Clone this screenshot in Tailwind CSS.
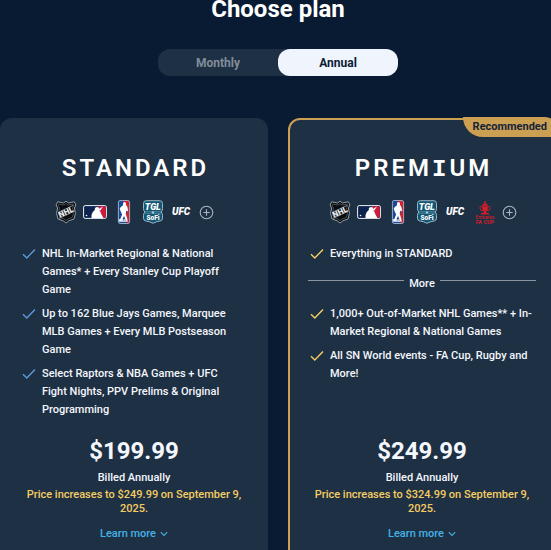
<!DOCTYPE html>
<html lang="en">
    <head>
        <meta charset="UTF-8" />
        <meta name="viewport" content="width=device-width, initial-scale=1.0" />
        <title>Choose plan</title>
        <script src="https://cdn.jsdelivr.net/npm/@tailwindcss/browser@4"></script>
    </head>
    <body class="bg-[#091b33] text-[#f4f7fc] font-['Roboto',sans-serif] overflow-hidden">
        <!-- Shared icons -->
        <svg class="hidden" aria-hidden="true">
            <symbol id="check" viewBox="0 0 14 12">
                <path d="M1 6.2 4.8 10 13 1.4" fill="none" stroke="currentColor" stroke-width="1.4" />
            </symbol>
            <symbol id="chevron" viewBox="0 0 8 6">
                <path d="M.8 1.2 4 4.4 7.2 1.2" fill="none" stroke="currentColor" stroke-width="1.1" />
            </symbol>
            <symbol id="plus" viewBox="0 0 15 15">
                <g fill="none" stroke="#aab4c2" stroke-width="1.1">
                    <circle cx="7.5" cy="7.5" r="6.3" />
                    <path d="M7.5 4.3v6.4M4.3 7.5h6.4" />
                </g>
            </symbol>
            <symbol id="nhl" viewBox="0 0 24 24">
                <path d="M12 1.2 14.4 3 20.3 1.8 21.9 5 20.4 8 21.4 13.5 20 19 14.8 20.8 12 23 9.2 20.8 4 19 2.6 13.5 3.6 8 2.1 5 3.7 1.8 9.6 3Z" fill="#05080b" stroke="#a5adb3" stroke-width=".9" />
                <path d="M12 3.6 14 5 19 4 19.8 5.4 18.6 8 19.5 13.4 18.4 17.4 14 19 12 20.6 10 19 5.6 17.4 4.5 13.4 5.4 8 4.2 5.4 5 4 10 5Z" fill="#080d12" stroke="#777f86" stroke-width=".6" />
                <path d="M4.6 12.2 19.3 5.3M5 18.4 19.4 11.6" stroke="#b9c0c5" stroke-width=".7" />
                <text x="12" y="14.8" transform="rotate(-25 12 12)" text-anchor="middle" font-family="Roboto" font-size="8" font-weight="900" fill="#e8ecee">NHL</text>
            </symbol>
            <symbol id="mlb" viewBox="0 0 24 24">
                <rect x=".6" y="5.6" width="22.8" height="12.8" rx="1.6" fill="#0c2350" stroke="#eef1f5" stroke-width="1" />
                <path d="M15 6.2h6.6q1.2 0 1.2 1.200v9.200q0 1.200-1.200 1.200H20l-3-6z" fill="#cf1a3c" />
                <path d="M8.5 17.9V15l1.3-3.1 2-1.8.1-2 1.7-1.2 2.3.5.6 2.1-.3 1.1 1.4 1.3.8 2.4 2 3.6Z" fill="#fff" />
                <path d="M15.8 9.3 20 6.3 16.9 11.3Z" fill="#fff" />
                <circle cx="3.5" cy="15.5" r=".8" fill="#fff" />
            </symbol>
            <symbol id="nba" viewBox="0 0 24 24">
                <rect x="6.4" y=".5" width="11.2" height="23" rx="1.8" fill="#174a9b" />
                <path d="M11.5 1h4.3q1.3 0 1.3 1.3v19.4q0 1.3-1.3 1.3h-1L12.8 16l2.3-4-2-5Z" fill="#d8202d" />
                <path d="M11.2 2.5 13 2l1 1.2-.1 1.6 1.5 2.2.8 4.5-1.8-1-.7 3 1.7 5.7.2 3-1.5-1-2-5.2-2.700 5-1.800-.2 2.500-6.300-1.600-3.400-.8-2.900 2.300-2.300.9-.4Z" fill="#fff" />
                <rect x="6.4" y=".5" width="11.2" height="23" rx="1.8" fill="none" stroke="#d7dbe3" stroke-width=".7" />
                <text x="10.4" y="22.3" text-anchor="middle" font-family="Roboto" font-size="3.5" font-weight="900" fill="#fff">NBA</text>
            </symbol>
            <symbol id="tgl" viewBox="0 0 24 24">
                <path d="M5.2.7h13.6q2.7 0 2.7 2.8v5.2q0 2.2-1.4 3.3 1.4 1.2 1.4 3.4v3q0 2-2.1 2.5Q15 21.5 12 23.3 9 21.5 4.6 20.9q-2.1-.5-2.1-2.5v-3q0-2.2 1.4-3.4-1.4-1.1-1.4-3.3V3.5Q2.5.7 5.2.7Z" fill="#125674" stroke="#a9c4d0" stroke-width=".9" />
                <path d="M4 11.7H20M4 13.3H20" stroke="#8eb1c3" stroke-width=".5" />
                <circle cx="12" cy="12.5" r="1.2" fill="#a9c4d0" />
                <text x="11.8" y="9.9" text-anchor="middle" font-family="Roboto" font-size="9" font-weight="900" font-style="italic" fill="#fff">TGL</text>
                <text x="12" y="20" text-anchor="middle" font-family="Roboto" font-size="6.5" font-weight="900" fill="#fff">SoFi</text>
            </symbol>
            <symbol id="ufc" viewBox="0 0 24 24">
                <text x="11" y="15.3" text-anchor="middle" font-family="Roboto" font-size="10" font-weight="900" font-style="italic" fill="#fff">UFC</text>
            </symbol>
            <symbol id="facup" viewBox="0 0 24 24">
                <g fill="#d01f2c">
                    <path d="M12 .4 12.9 2.3 12.5 3.3 14.6 4.5 15 5.8H9L9.4 4.5 11.5 3.3 11.1 2.3Z" />
                    <path d="M9 6.3h6l-.4 3.7-1.6 1.7.3 1 2.6.4.5 1.4H7.6l.5-1.4 2.6-.4.3-1L9.4 10Z" />
                </g>
                <path d="M9.2 7Q6.5 5.2 7 8.5T10 10.6M14.8 7Q17.5 5.2 17 8.5T14 10.6" fill="none" stroke="#d01f2c" stroke-width=".9" />
                <text x="12" y="18.7" text-anchor="middle" font-family="Roboto" font-size="4.8" font-weight="500" fill="#d01f2c">Emirates</text>
                <text x="12" y="23.6" text-anchor="middle" font-family="Roboto" font-size="5.5" font-weight="700" fill="#d01f2c">FA CUP</text>
            </symbol>
        </svg>

        <main class="-mr-[5px]">
            <h1 class="text-center text-2xl leading-[18px] font-bold text-white">Choose plan</h1>

            <div class="mx-auto mt-[31px] grid h-[27px] w-60 grid-cols-2 rounded-xl bg-[#1e3044] text-xs font-bold">
                <button type="button" class="rounded-xl text-[#828c99]">Monthly</button>
                <button type="button" aria-pressed="true" class="rounded-xl bg-[#f0f4fd] text-[#0a1b33]">Annual</button>
            </div>

            <div class="mt-[42px] grid grid-cols-2 gap-5">
                <!-- Standard -->
                <section class="flex flex-col rounded-xl border-2 border-[#1e3044] bg-[#1e3044] px-[18px] pt-[33px] pb-6">
                    <h2 class="pl-[3px] text-center text-2xl leading-[30px] font-semibold tracking-[3px] text-white">STANDARD</h2>
                    <div class="mt-[17px] flex items-center justify-center gap-[5px]">
                        <svg class="size-6"><use href="#nhl" /></svg>
                        <svg class="size-6"><use href="#mlb" /></svg>
                        <svg class="size-6"><use href="#nba" /></svg>
                        <svg class="size-6"><use href="#tgl" /></svg>
                        <svg class="size-6"><use href="#ufc" /></svg>
                        <svg class="size-[15px]"><use href="#plus" /></svg>
                    </div>
                    <ul class="mt-[21px] space-y-1.5 pr-1 text-[11px] leading-[18px] font-medium">
                        <li class="flex gap-1.5">
                            <svg class="ml-0.5 mt-[3px] h-3 w-3.5 shrink-0 text-[#5c9ad6]"><use href="#check" /></svg>
                            <span>NHL In-Market Regional &amp; National Games* + Every Stanley Cup Playoff Game</span>
                        </li>
                        <li class="flex gap-1.5">
                            <svg class="ml-0.5 mt-[3px] h-3 w-3.5 shrink-0 text-[#5c9ad6]"><use href="#check" /></svg>
                            <span>Up to 162 Blue Jays Games, Marquee MLB Games + Every MLB Postseason Game</span>
                        </li>
                        <li class="flex gap-1.5">
                            <svg class="ml-0.5 mt-[3px] h-3 w-3.5 shrink-0 text-[#5c9ad6]"><use href="#check" /></svg>
                            <span>Select Raptors &amp; NBA Games + UFC Fight Nights, PPV Prelims &amp; Original Programming</span>
                        </li>
                    </ul>
                    <div class="mt-auto pt-[17px] text-center text-[11px] font-medium">
                        <p class="text-2xl leading-[30px] font-bold">$199.99</p>
                        <p class="mt-[3px] leading-[18px]">Billed Annually</p>
                        <p class="mt-px leading-[14px] text-[#f5cd62]">Price increases to $249.99 on September 9, 2025.</p>
                        <button type="button" class="mt-[9px] inline-flex items-center gap-1 leading-[18px] text-[#43b2e6]">
                            Learn more
                            <svg class="h-1.5 w-2"><use href="#chevron" /></svg>
                        </button>
                    </div>
                </section>

                <!-- Premium -->
                <section class="relative flex flex-col rounded-xl border-2 border-[#cca052] bg-[#1e3044] px-[18px] pt-[33px] pb-6">
                    <span class="absolute -top-[3px] -right-[3px] rounded-tr-xl rounded-bl-[20px] bg-[#cca052] px-2.5 text-[11px] leading-5 font-bold text-[#14233a]">Recommended</span>
                    <h2 class="pl-[3px] text-center text-2xl leading-[30px] font-semibold tracking-[3px] text-white">PREM<span class="font-['Liberation_Mono',monospace] leading-none font-bold">I</span>UM</h2>
                    <div class="mt-[17px] flex items-center justify-center gap-[5px]">
                        <svg class="size-6"><use href="#nhl" /></svg>
                        <svg class="size-6"><use href="#mlb" /></svg>
                        <svg class="size-6"><use href="#nba" /></svg>
                        <svg class="size-6"><use href="#tgl" /></svg>
                        <svg class="size-6"><use href="#ufc" /></svg>
                        <svg class="size-6"><use href="#facup" /></svg>
                        <svg class="size-[15px]"><use href="#plus" /></svg>
                    </div>
                    <ul class="mt-[21px] text-[11px] leading-[18px] font-medium">
                        <li class="flex gap-1.5">
                            <svg class="ml-0.5 mt-[3px] h-3 w-3.5 shrink-0 text-[#f5cd62]"><use href="#check" /></svg>
                            <span>Everything in STANDARD</span>
                        </li>
                    </ul>
                    <div class="my-3 flex gap-[5px] text-[11px] leading-[18px] font-medium">
                        <span class="mt-[5px] h-px grow bg-[#8b95a1]"></span>
                        More
                        <span class="mt-[5px] h-px grow bg-[#8b95a1]"></span>
                    </div>
                    <ul class="space-y-1.5 text-[11px] leading-[18px] font-medium">
                        <li class="flex gap-1.5">
                            <svg class="ml-0.5 mt-[3px] h-3 w-3.5 shrink-0 text-[#f5cd62]"><use href="#check" /></svg>
                            <span>1,000+ Out-of-Market NHL Games** + In-Market Regional &amp; National Games</span>
                        </li>
                        <li class="flex gap-1.5">
                            <svg class="ml-0.5 mt-[3px] h-3 w-3.5 shrink-0 text-[#f5cd62]"><use href="#check" /></svg>
                            <span>All SN World events - FA Cup, Rugby and More!</span>
                        </li>
                    </ul>
                    <div class="mt-auto pt-[17px] text-center text-[11px] font-medium">
                        <p class="text-2xl leading-[30px] font-bold">$249.99</p>
                        <p class="mt-[3px] leading-[18px]">Billed Annually</p>
                        <p class="mt-px leading-[14px] text-[#f5cd62]">Price increases to $324.99 on September 9, 2025.</p>
                        <button type="button" class="mt-[9px] inline-flex items-center gap-1 leading-[18px] text-[#43b2e6]">
                            Learn more
                            <svg class="h-1.5 w-2"><use href="#chevron" /></svg>
                        </button>
                    </div>
                </section>
            </div>
        </main>
    </body>
</html>
